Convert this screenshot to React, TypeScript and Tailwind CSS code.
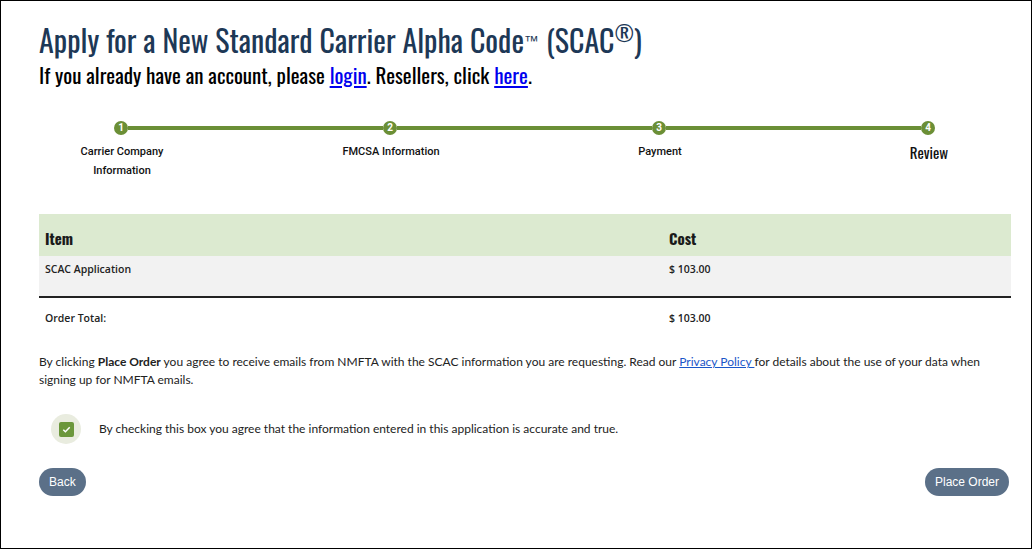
import React from "react";

const condensed = { fontFamily: 'Oswald, "Liberation Sans Narrow", "DejaVu Sans Condensed", sans-serif' };

const steps = [
  { n: 1, label: ["Carrier Company", "Information"] },
  { n: 2, label: ["FMCSA Information"] },
  { n: 3, label: ["Payment"] },
  { n: 4, label: ["Review"], current: true },
];

function StepDot({ n }: { n: number }) {
  return (
    <div className="flex h-[14px] w-[14px] shrink-0 items-center justify-center rounded-full bg-[#6b8f36] text-[10px] font-bold leading-none text-white font-['Roboto',sans-serif]">
      {n}
    </div>
  );
}

function Stepper() {
  return (
    <div className="mt-[33px]">
      <div className="ml-[75px] flex w-[821px] items-center">
        {steps.map((s, i) => (
          <React.Fragment key={s.n}>
            <StepDot n={s.n} />
            {i < steps.length - 1 && <div className="h-[4px] flex-1 bg-[#6b8f36]" />}
          </React.Fragment>
        ))}
      </div>
      <div className="ml-[23px] mt-[7px] flex w-[927px] justify-between">
        {steps.map((s) =>
          s.current ? (
            <div key={s.n} className="w-[120px] text-center text-[15px] leading-[20px] text-[#111]" style={condensed}>
              {s.label[0]}
            </div>
          ) : (
            <div key={s.n} className="w-[120px] text-center font-['Roboto',sans-serif] text-[11px] font-medium leading-[19px] text-[#111]">
              {s.label.map((l) => (
                <div key={l}>{l}</div>
              ))}
            </div>
          )
        )}
      </div>
    </div>
  );
}

function OrderTable() {
  return (
    <div className="mt-[34px] w-[972px] font-['Open_Sans',sans-serif] text-[10.5px] font-semibold text-[#222]">
      <div className="flex h-[42px] items-end bg-[#dcead0] pb-[7px]">
        <div className="w-[630px] pl-[6px] text-[15px] font-bold text-[#1a1a1a]" style={condensed}>Item</div>
        <div className="flex-1 text-[15px] font-bold text-[#1a1a1a]" style={condensed}>Cost</div>
      </div>
      <div className="flex h-[40px] bg-[#f2f2f2] pt-[6px]">
        <div className="w-[630px] pl-[6px]">SCAC Application</div>
        <div className="flex-1">$ 103.00</div>
      </div>
      <div className="h-[2px] bg-[#222]" />
      <div className="flex h-[36px] items-center pt-[6px]">
        <div className="w-[630px] pl-[6px]">Order Total:</div>
        <div className="flex-1">$ 103.00</div>
      </div>
    </div>
  );
}

export default function App() {
  return (
    <div className="h-[549px] w-[1032px] border border-black bg-white">
      <div className="pl-[38px] pt-[19px]">
        <h1 className="text-[30px] leading-[40px] text-[#1d3856]" style={condensed}>
          Apply for a New Standard Carrier Alpha Code
          <sup className="font-['Liberation_Sans',sans-serif] text-[15px]">™</sup> (SCAC<sup className="text-[22px]">®</sup>)
        </h1>
        <p className="mt-[2px] text-[21px] leading-[26px] text-black" style={condensed}>
          If you already have an account, please{" "}
          <a href="#" className="text-[#0000ee] underline">login</a>. Resellers, click{" "}
          <a href="#" className="text-[#0000ee] underline">here</a>.
        </p>

        <Stepper />

        <OrderTable />

        <p className="mt-[19px] w-[960px] font-['Lato',sans-serif] text-[12px] leading-[18px] text-[#222]">
          By clicking <b>Place Order</b> you agree to receive emails from NMFTA with the SCAC information you are requesting. Read our{" "}
          <a href="#" className="text-[#1a56c8] underline">Privacy Policy </a>for details about the use of your data when signing up for NMFTA emails.
        </p>

        <div className="mt-[25px] flex items-center">
          <div className="ml-[12px] flex h-[30px] w-[30px] items-center justify-center rounded-full bg-[#e9ecdf]">
            <div className="flex h-[15px] w-[15px] items-center justify-center rounded-[2px] bg-[#6b973b]">
              <svg width="11" height="11" viewBox="0 0 12 12" fill="none" stroke="white" strokeWidth="1.6">
                <path d="M2.5 6.2l2.3 2.3 4.7-5" />
              </svg>
            </div>
          </div>
          <span className="ml-[18px] font-['Lato',sans-serif] text-[12px] text-[#222]">
            By checking this box you agree that the information entered in this application is accurate and true.
          </span>
        </div>

        <div className="mt-[24px] flex w-[970px] justify-between font-['Liberation_Sans',sans-serif] text-[12px] text-white">
          <button className="h-[28px] rounded-full bg-[#5b7088] px-[10px]">Back</button>
          <button className="h-[28px] rounded-full bg-[#5b7088] px-[10px]">Place Order</button>
        </div>
      </div>
    </div>
  );
}
